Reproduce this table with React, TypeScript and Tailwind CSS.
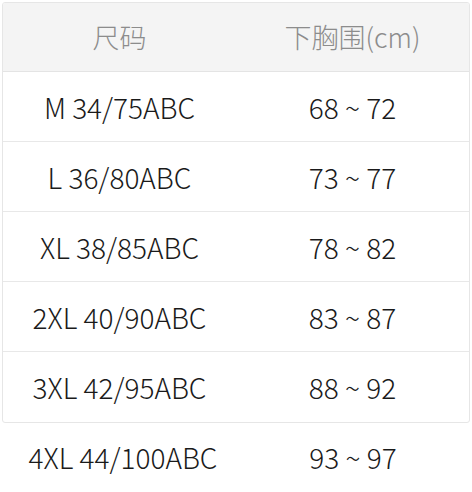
const filas = [
  { talla: 'M 34/75ABC', medida: '68 ~ 72' },
  { talla: 'L 36/80ABC', medida: '73 ~ 77' },
  { talla: 'XL 38/85ABC', medida: '78 ~ 82' },
  { talla: '2XL 40/90ABC', medida: '83 ~ 87' },
  { talla: '3XL 42/95ABC', medida: '88 ~ 92' },
];

export default function App() {
  return (
    <div
      className="w-[472px] h-[492px] bg-white pt-[2px] text-[28px] font-light text-[#1a1a1a]"
      style={{ fontFamily: '"Noto Sans CJK SC", "Noto Sans", sans-serif' }}
    >
      {/* tabla con borde */}
      <div className="mx-[2px] border border-[#e6e6e6] rounded-[3px] overflow-hidden">
        <div className="h-[69px] bg-[#f4f4f4] border-b border-[#e4e4e4] grid grid-cols-2 items-center text-center text-[27px] text-[#8c8c8c]">
          <span>尺码</span>
          <span>下胸围(cm)</span>
        </div>
        {filas.map((f, i) => (
          <div
            key={f.talla}
            className={`h-[70px] grid grid-cols-2 items-center text-center ${i < filas.length - 1 ? 'border-b border-[#e8e8e8]' : ''}`}
          >
            <span>{f.talla}</span>
            <span>{f.medida}</span>
          </div>
        ))}
      </div>

      {/* última fila sin borde */}
      <div className="mx-[2px] h-[68px] grid grid-cols-2 items-center text-center">
        <span className="pl-[8px]">4XL 44/100ABC</span>
        <span>93 ~ 97</span>
      </div>
    </div>
  );
}
